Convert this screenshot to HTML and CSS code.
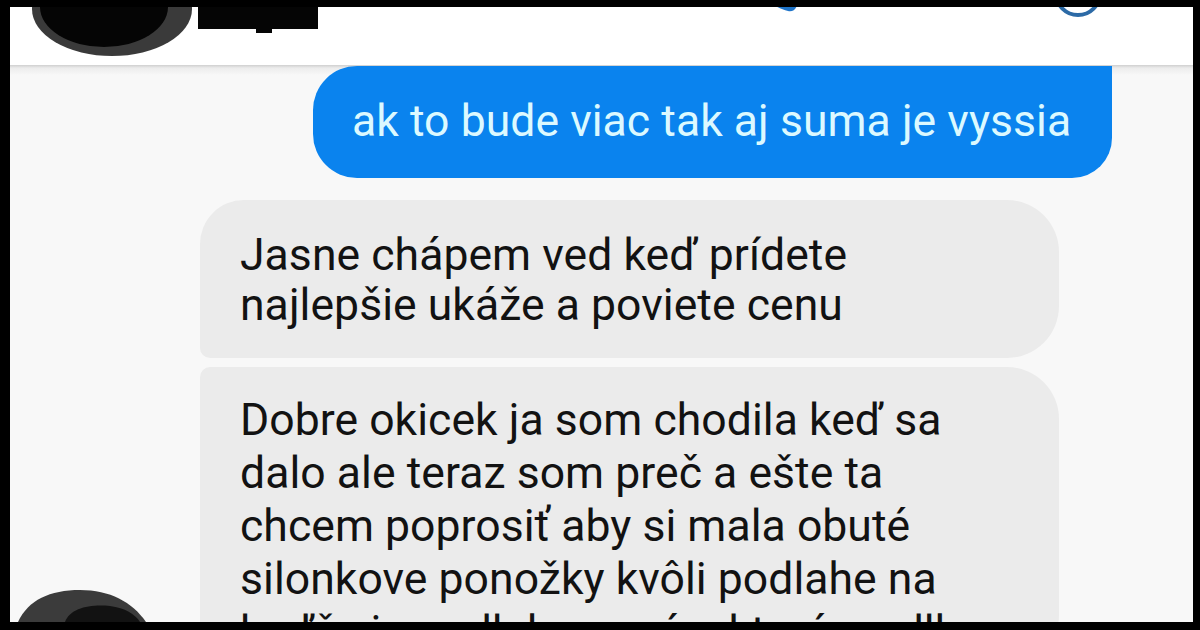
FILE: index.html
```html
<!DOCTYPE html>
<html lang="sk">
<head>
<meta charset="utf-8">
<title>Chat</title>
<link rel="stylesheet" href="styles.css">
</head>
<body>
<div class="screen">
  <header class="topbar">
    <svg class="ico-call" width="40" height="24" viewBox="0 0 40 24"><path d="M6 0 C10 6 18 10 26 12 C30 13 34 11 35 6 L36 0 Z" fill="#1f74c9"/></svg>
    <svg class="ico-info" width="56" height="40" viewBox="0 0 56 40"><circle cx="28" cy="12" r="22" fill="none" stroke="#2c6aa6" stroke-width="4"/></svg>
  </header>
  <div class="shade"></div>
  <main class="thread">
    <div class="row out">
      <div class="bubble blue">ak to bude viac tak aj suma je vyssia</div>
    </div>
    <div class="row in">
      <div class="bubble grey first">Jasne chápem ved keď prídete<br>najlepšie ukáže a poviete cenu</div>
      <div class="bubble grey mid">Dobre okicek ja som chodila keď sa<br>dalo ale teraz som preč a ešte ta<br>chcem poprosiť aby si mala obuté<br>silonkove ponožky kvôli podlahe na<br>keďže je podlaha nová a ktorá sa dlho</div>
    </div>
  </main>
  <svg class="redact-top" width="320" height="60" viewBox="0 0 320 60">
    <ellipse cx="102" cy="2" rx="80" ry="47" fill="#3a3a3a"/>
    <ellipse cx="94" cy="0" rx="64" ry="40" fill="#050505"/>
    <path d="M188 0 H308 V22 H262 V26 H246 V22 H188 Z" fill="#050505"/>
  </svg>
  <svg class="redact-bottom" width="160" height="40" viewBox="0 0 160 40">
    <path d="M8 40 C18 18 40 8 70 8 C100 8 122 20 136 40 Z" fill="#3b3b3b"/>
    <path d="M55 40 C60 26 80 22 100 24 C115 26 125 32 130 40 Z" fill="#121212"/>
  </svg>
</div>
</body>
</html>
```

FILE: styles.css
```css
* { box-sizing: border-box; }
html, body { margin: 0; padding: 0; }
body {
  background: #000;
  width: 1200px;
  height: 630px;
  overflow: hidden;
  font-family: Roboto, "Noto Sans", Arial, sans-serif;
}
.screen {
  position: relative;
  margin: 7px 7px 0 10px;
  width: 1183px;
  height: 615px;
  overflow: hidden;
  background: #f8f8f8;
}
.topbar {
  height: 58px;
  background: #fff;
  display: flex;
  align-items: flex-start;
}
.ico-call { margin: -8px 0 0 752px; }
.ico-info { margin: -26px 0 0 248px; }
.shade {
  height: 10px;
  background: linear-gradient(#cfcfcf, #ececec 30%, #f8f8f8);
  margin-bottom: -10px;
}
.thread {
  display: flex;
  flex-direction: column;
  gap: 22px;
  padding: 1px 81px 0 190px;
}
.row { display: flex; flex-direction: column; gap: 9px; }
.row.out { align-items: flex-end; }
.row.in { align-items: flex-start; }
.bubble {
  font-size: 44.5px;
  line-height: 51px;
  letter-spacing: 0.05px;
}
.blue {
  background: #0a83ee;
  color: #dcf9ff;
  width: 799px;
  height: 112px;
  padding: 30px 0 0 39px;
  border-radius: 44px 0 40px 44px;
}
.grey {
  background: #ebebeb;
  color: #121212;
  width: 859px;
  padding: 0 0 0 40px;
}
.first {
  height: 158px;
  padding-top: 30px;
  line-height: 50px;
  border-radius: 44px 52px 52px 10px;
}
.mid {
  height: 300px;
  padding-top: 27px;
  line-height: 53px;
  border-radius: 10px 52px 52px 10px;
}
.redact-top { position: absolute; left: 0; top: 0; }
.redact-bottom { position: absolute; left: 0; top: 575px; }
```
